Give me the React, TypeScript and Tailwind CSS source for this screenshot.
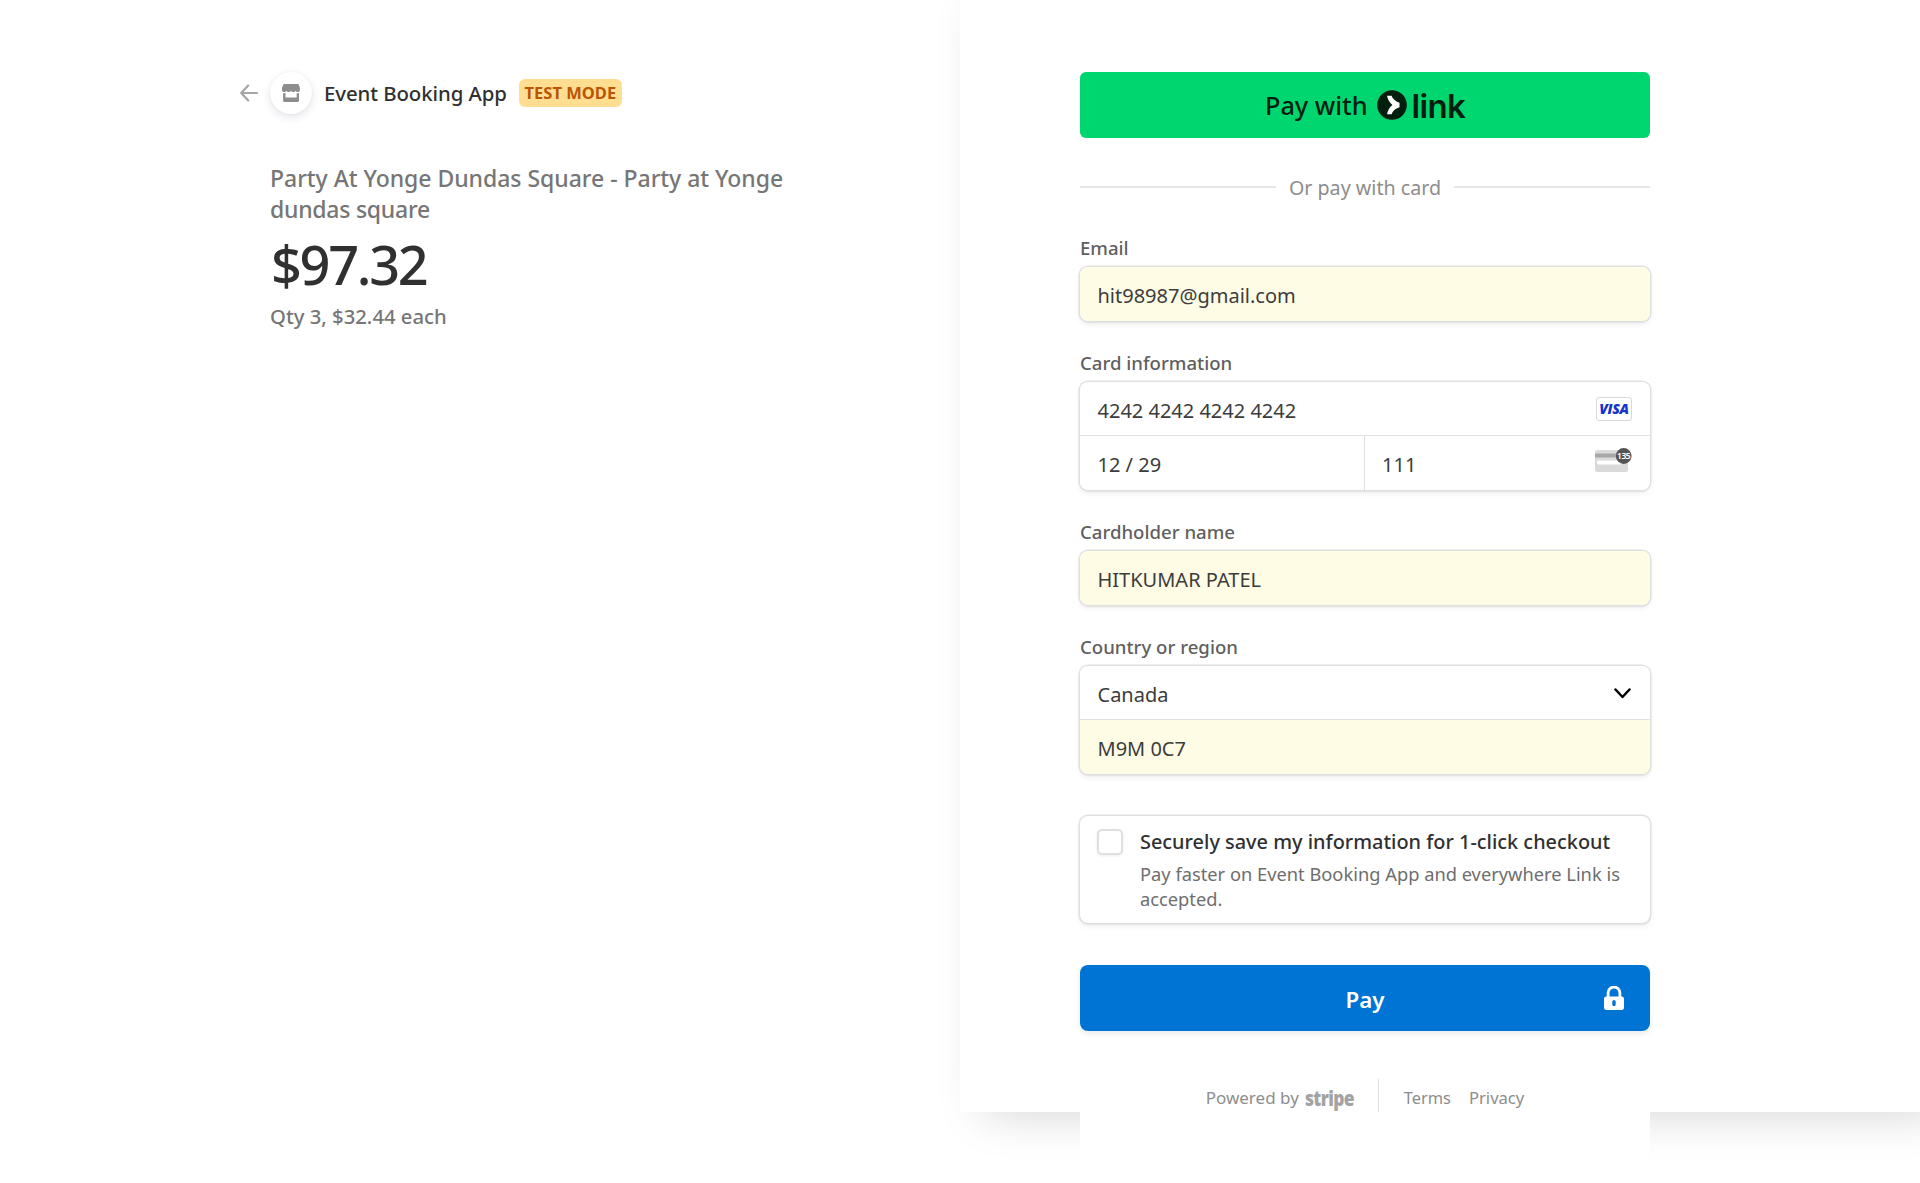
import type { ReactNode } from "react";

const FIELD_SHADOW =
  "shadow-[0_0_0_1.5px_#e0e0e0,0_3px_6px_rgba(0,0,0,0.07),0_1.5px_2px_rgba(0,0,0,0.05)]";

function ArrowLeftIcon() {
  return (
    <svg width="18" height="18" viewBox="0 0 18 18" fill="none" stroke="#a6a6a6" strokeWidth="2.2" strokeLinecap="round" strokeLinejoin="round">
      <path d="M17 9H1.2M8.2 1.6 1.200 9l7 7.4" />
    </svg>
  );
}

function StoreIcon() {
  return (
    <svg width="18" height="18" viewBox="0 0 18 18" fill="#8d8d8d">
      <path d="M2.4 0h13.2c.6 0 1 .3 1.200.8L17.900 3.700v2.200c0 1.200-.9 2.200-2.100 2.200-1 0-1.800-.6-2.200-1.400-.4.800-1.200 1.400-2.300 1.400-1 0-1.800-.6-2.300-1.400-.5.800-1.300 1.400-2.300 1.400-1.100 0-1.900-.6-2.300-1.400C4 7.500 3.200 8.100 2.200 8.100 1 8.100 0 7.100 0 5.900V3.700L1.200.8C1.400.3 1.800 0 2.400 0z" />
      <path d="M1.100 9.200c.9.200 1.700.1 2.400-.3v4.500h11.200V8.900c.7.400 1.500.5 2.300.3v7.600c0 .7-.5 1.200-1.200 1.200H2.300c-.7 0-1.200-.5-1.200-1.200z" />
    </svg>
  );
}

function LinkMark() {
  return (
    <svg width="30" height="30" viewBox="0 0 72 72">
      <circle cx="36" cy="36" r="35.500" fill="#011e0f" />
      <path d="M24 14h11c2.500 7 9 13.500 19 16.500v11C44 44.500 37.500 51 35 58H24c2-9 6-16.500 13-22-7-5.500-11-13-13-22z" fill="#fff" />
    </svg>
  );
}

function CvcIcon() {
  return (
    <svg width="38" height="24" viewBox="0 0 38 24">
      <rect x="0" y="2" width="33" height="22" rx="2.500" fill="#dadada" />
      <rect x="0" y="5.500" width="33" height="4" fill="#a8a8a8" />
      <rect x="2" y="12.500" width="25" height="4" rx="1" fill="#fff" />
      <circle cx="28.700" cy="8" r="7.900" fill="#545454" />
      <text x="28.400" y="11.200" textAnchor="middle" fontFamily="Noto Sans, sans-serif" fontSize="9" fontWeight="600" letterSpacing="-0.700" fill="#fff">135</text>
    </svg>
  );
}

function LockIcon() {
  return (
    <svg width="20" height="24" viewBox="0 0 20 24">
      <path d="M4.100 12V6.900a5.900 5.900 0 0 1 11.800 0V12" fill="none" stroke="#fff" strokeWidth="2.800" />
      <path fillRule="evenodd" fill="#fff" d="M2.200 10.500h15.600c1.200 0 2.200 1 2.200 2.200v9.100c0 1.200-1 2.200-2.200 2.200H2.200C1 24 0 23 0 21.800v-9.100c0-1.200 1-2.200 2.200-2.200zM10 14a1.700 1.700 0 0 0-1.700 1.700v2.800a1.700 1.700 0 0 0 3.400 0v-2.800A1.700 1.700 0 0 0 10 14z" />
    </svg>
  );
}

function Field({ label, children }: { label: string; children: ReactNode }) {
  return (
    <div className="mb-[30px]">
      <div className="mb-[7px] h-6 text-[18.6px] font-medium leading-6 text-[#5f5f5f]">{label}</div>
      <div className={`overflow-hidden rounded-[8px] ${FIELD_SHADOW}`}>{children}</div>
    </div>
  );
}

function Row({ value, filled, children }: { value: string; filled?: boolean; children?: ReactNode }) {
  return (
    <div className={`flex h-[54px] flex-1 items-center justify-between pl-[17.5px] pr-[18px] text-[20px] text-[#3c3c3c] ${filled ? "bg-[#fffce6]" : "bg-white"}`}>
      <span className="pt-1">{value}</span>
      {children}
    </div>
  );
}

function Summary() {
  return (
    <div className="w-[960px] pl-[240px] pt-[72px]">
      <div className="flex h-[42px] items-center">
        <ArrowLeftIcon />
        <div className="ml-3 flex size-[42px] items-center justify-center rounded-full bg-white shadow-[0_3px_8px_rgba(50,50,93,0.13),0_0_3px_rgba(0,0,0,0.04)]">
          <StoreIcon />
        </div>
        <div className="ml-3 text-[20.4px] font-medium leading-[30px] tracking-[-0.08px] text-[#303030]">Event Booking App</div>
        <div className="ml-[12px] flex h-7 w-[103px] items-center justify-center rounded-[6px] bg-[#ffde92] text-[16.5px] font-bold text-[#bb5504]">TEST MODE</div>
      </div>
      <div className="ml-[30px] mt-[49px] text-[23px] font-medium leading-[31px] text-[#767676]">
        <div className="tracking-[-0.03px]">Party At Yonge Dundas Square - Party at Yonge</div>
        <div className="tracking-[-0.25px]">dundas square</div>
      </div>
      <div className="ml-[31px] mt-1.5 text-[54px] font-medium leading-[66px] tracking-[-2.3px] text-[#303030]">$97.32</div>
      <div className="ml-[30px] mt-1 text-[20.3px] font-medium leading-[30px] text-[#767676]">Qty 3, $32.44 each</div>
    </div>
  );
}

export default function App() {
  return (
    <div className="flex h-[1183px] w-[1920px] overflow-hidden whitespace-nowrap bg-white font-['Noto_Sans','Open_Sans',sans-serif]">
      <Summary />
      <div className="h-[1112px] w-[960px] bg-white pl-[120px] shadow-[22.5px_0_45px_rgba(0,0,0,0.18)]">
        <div className="h-[1183px] w-[570px] bg-white pt-[72px]">
          <button className="flex h-[66px] w-full items-center justify-center rounded-[6px] bg-[#00d66f] text-[#011e0f]">
            <span className="text-[25.300px] font-medium leading-[34px]">Pay with</span>
            <span className="ml-[9px]"><LinkMark /></span>
            <span className="ml-[5px] mt-0.5 font-['Inter',sans-serif] text-[33px] font-semibold leading-[36px] tracking-[-0.7px]">link</span>
          </button>
          <div className="flex h-[98px] items-center gap-[13px]">
            <div className="h-0.5 flex-1 bg-[#e6e6e6]" />
            <div className="pt-0.5 text-[19.700px] leading-7 text-[#8d8d8d]">Or pay with card</div>
            <div className="h-0.5 flex-1 bg-[#e6e6e6]" />
          </div>
          <Field label="Email">
            <Row value="hit98987@gmail.com" filled />
          </Field>
          <Field label="Card information">
            <div className="[&>div]:h-[53px]">
              <Row value="4242 4242 4242 4242">
                <span className="flex h-6 w-9 items-center justify-center rounded-[3px] border border-[#d8d8d8] font-['Open_Sans',sans-serif] text-[14px] font-extrabold italic tracking-[-0.3px] text-[#1434cb]">VISA</span>
              </Row>
            </div>
            <div className="flex border-t border-[#e0e0e0]">
              <div className="flex w-[283.5px]">
                <Row value="12 / 29" />
              </div>
              <div className="w-px bg-[#e0e0e0]" />
              <Row value="111">
                <span className="-mr-px mb-[7px]"><CvcIcon /></span>
              </Row>
            </div>
          </Field>
          <Field label="Cardholder name">
            <Row value="HITKUMAR PATEL" filled />
          </Field>
          <Field label="Country or region">
            <div className="[&>div]:h-[53px]">
              <Row value="Canada">
                <svg className="mr-px mt-0.5" width="17" height="11" viewBox="0 0 17 11" fill="none" stroke="#000" strokeWidth="2.500" strokeLinecap="round" strokeLinejoin="round">
                  <path d="M1.500 1.500 8.500 9l7-7.500" />
                </svg>
              </Row>
            </div>
            <div className="border-t border-[#e0e0e0]">
              <Row value="M9M 0C7" filled />
            </div>
          </Field>
          <div className={`mt-[42px] flex h-[107px] rounded-[8px] pl-[17px] pt-[13px] ${FIELD_SHADOW}`}>
            <div className="size-[26px] rounded-[5px] border-2 border-[#e0e0e0] bg-white shadow-[0_1px_3px_rgba(0,0,0,0.08)]" />
            <div className="ml-[17px]">
              <div className="text-[19.900px] font-medium leading-[26px] text-[#303030]">Securely save my information for 1-click checkout</div>
              <div className="mt-[5.500px] text-[18.300px] leading-[25px] text-[#6e6e6e]">
                Pay faster on Event Booking App and everywhere Link is
                <br />
                accepted.
              </div>
            </div>
          </div>
          <button className="mt-[42px] flex h-[66px] w-full items-center justify-end rounded-[8px] bg-[#0074d4] pr-[26px] text-white shadow-[0_3px_6px_rgba(0,0,0,0.08)]">
            <span className="flex-1 pl-[46px] pt-1 text-center text-[22.300px] font-semibold leading-[30px]">Pay</span>
            <LockIcon />
          </button>
          <div className="mt-12 flex h-[33px] items-center justify-center text-[17px] leading-6 text-[#8d8d8d]">
            <span className="pt-1">Powered by</span>
            <span className="ml-1.5 w-[49px] pt-1.5">
              <span className="inline-block origin-left scale-x-[0.83] text-[21px] font-black tracking-[-0.8px] text-[#a3a3a3]">stripe</span>
            </span>
            <span className="ml-6 h-[33px] w-px bg-[#e0e0e0]" />
            <span className="ml-[25px] pt-1 text-[16.400px]">Terms</span>
            <span className="ml-[18px] pt-1 text-[16.600px]">Privacy</span>
          </div>
        </div>
      </div>
    </div>
  );
}
